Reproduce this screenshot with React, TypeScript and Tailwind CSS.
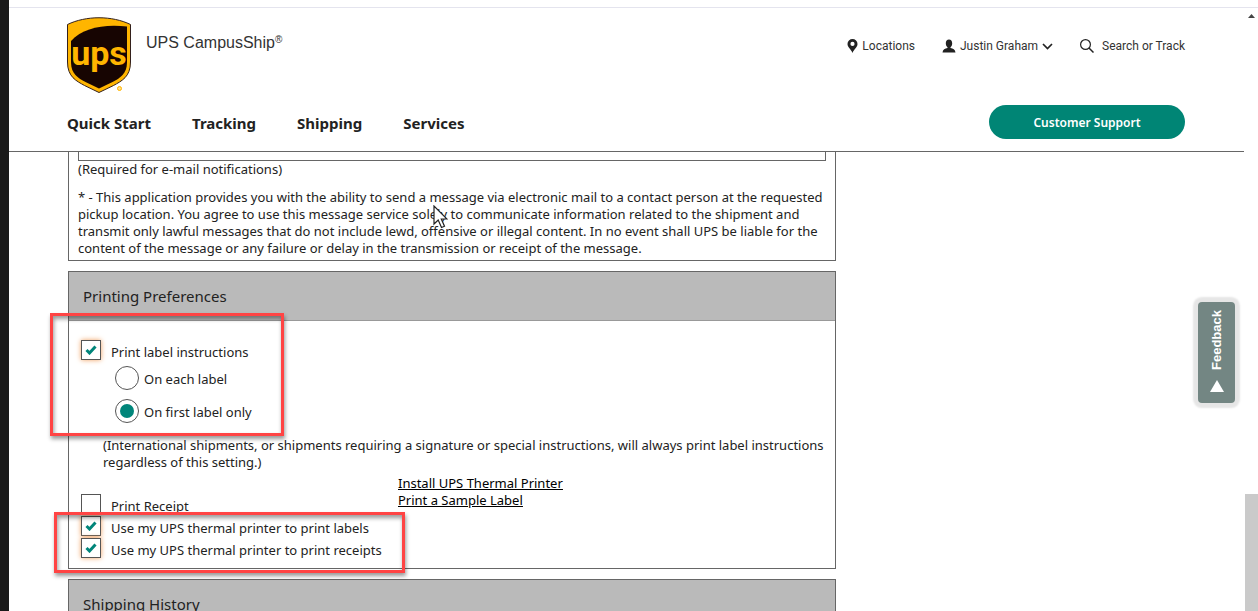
import { useState } from "react";
import type { ReactNode } from "react";

const navLinks = ["Quick Start", "Tracking", "Shipping", "Services"];

function Logo() {
  return (
    <svg viewBox="0 0 64 76" className="h-[76px] w-16 shrink-0" role="img" aria-label="UPS">
      <path
        d="M.5 7.500C19-1.500 45-1.500 63.500 7.500V45c0 15-9 19-17 23.500L32 75.500l-14.500-7C9.500 64 .5 60 .5 45Z"
        fill="#ffb500"
        stroke="#33201c"
        strokeWidth="1"
      />
      <path
        d="M4 24C16 11 36 7 60 9.500V45c0 12-7 16-14.500 20L32 71.500 18.500 65C11 61 4 57 4 45Z"
        fill="#170502"
      />
      <text
        x="32"
        y="48"
        textAnchor="middle"
        fontSize="34"
        fontWeight="700"
        fill="#ffb500"
        className="font-['Roboto',sans-serif]"
      >
        ups
      </text>
      <circle cx="52.500" cy="71.500" r="2" fill="#ffe08a" stroke="#ffb500" strokeWidth="1" />
    </svg>
  );
}

function PinIcon() {
  return (
    <svg viewBox="0 0 11 14" className="h-3.5 w-[11px]" aria-hidden="true">
      <path
        fillRule="evenodd"
        fill="#222"
        d="M5.500 0A5 5 0 0 0 .5 5c0 3.500 3.500 5 5 9 1.500-4 5-5.500 5-9a5 5 0 0 0-5-5Zm0 2.800a2.100 2.100 0 1 1 0 4.200 2.100 2.100 0 0 1 0-4.200Z"
      />
    </svg>
  );
}

function UserIcon() {
  return (
    <svg viewBox="0 0 14 14" className="size-3.5" aria-hidden="true">
      <path
        fill="#222"
        d="M7 .5c2 0 3.200 1.500 3.200 3.700 0 1.800-.7 3.300-1.700 4v.9c2.500.5 4.700 1.400 5 4.400H.5c.3-3 2.500-3.900 5-4.400v-.9c-1-.7-1.700-2.200-1.700-4C3.800 2 5 .5 7 .5Z"
      />
    </svg>
  );
}

function Tick() {
  return (
    <svg viewBox="0 0 12 10" className="pointer-events-none col-start-1 row-start-1 h-2.5 w-3" aria-hidden="true">
      <path d="M1.500 5 4.500 8 10.500 1.500" fill="none" stroke="#00857a" strokeWidth="3" />
    </svg>
  );
}

function CheckRow({
  id,
  initial = false,
  children,
}: {
  id: string;
  initial?: boolean;
  children: ReactNode;
}) {
  const [checked, setChecked] = useState(initial);

  return (
    <div className="flex h-[22px] items-start gap-2.5">
      <span className="grid place-items-center">
        <input
          id={id}
          type="checkbox"
          checked={checked}
          onChange={(e) => setChecked(e.target.checked)}
          className="col-start-1 row-start-1 size-5 appearance-none border border-[#555] bg-white checked:shadow-[0_0_5px_#f0a060]"
        />
        {checked && <Tick />}
      </span>
      <label htmlFor={id} className="pt-1">
        {children}
      </label>
    </div>
  );
}

function RadioRow({
  id,
  checked,
  onSelect,
  children,
}: {
  id: string;
  checked: boolean;
  onSelect: () => void;
  children: ReactNode;
}) {
  return (
    <div className="flex h-6 items-start gap-[5px]">
      <input
        id={id}
        type="radio"
        name="label-instructions"
        checked={checked}
        onChange={onSelect}
        className="size-6 appearance-none rounded-full border border-[#555] bg-white bg-clip-content p-1 checked:bg-[#00857a]"
      />
      <label htmlFor={id} className="pt-[5px]">
        {children}
      </label>
    </div>
  );
}

function PanelTitle({ children }: { children: ReactNode }) {
  return (
    <h2 className="flex h-[49px] items-center border-b border-[#999] bg-[#bababa] px-3.5 text-[15px] text-[#222]">
      {children}
    </h2>
  );
}

export default function App() {
  const [placement, setPlacement] = useState("first");

  return (
    <div className="flex h-screen overflow-hidden bg-white font-['Noto_Sans',sans-serif] text-[13px] leading-[17px] text-[#222]">
      <div className="w-[9px] shrink-0 bg-[#1a1a1a]" />

      <div className="flex min-w-0 flex-1 flex-col">
        <div className="h-2 shrink-0 border-b border-[#e4e4ee]" />

        <div className="flex min-h-0 flex-1">
          <div className="relative flex min-w-0 flex-1 flex-col">
            <header className="shrink-0 border-b border-[#666] pt-[9px] pr-[59px] pb-3 pl-[58px]">
              <div className="flex items-start justify-between">
                <div className="flex items-start gap-[15px]">
                  <Logo />
                  <p className="pt-4 font-['Liberation_Sans',sans-serif] text-base leading-5 text-[#333]">
                    UPS CampusShip<sup className="text-[10px]">®</sup>
                  </p>
                </div>
                <div className="flex items-center gap-[27px] pt-5 font-['Roboto',sans-serif] text-xs leading-[18px] text-[#333]">
                  <a href="#locations" className="flex items-center gap-1">
                    <PinIcon />
                    Locations
                  </a>
                  <button type="button" className="flex items-center gap-1">
                    <UserIcon />
                    Justin Graham
                    <svg viewBox="0 0 11 7" className="h-[7px] w-[11px]" aria-hidden="true">
                      <path d="m1 1 4.500 4.500L10 1" fill="none" stroke="#222" strokeWidth="1.700" />
                    </svg>
                  </button>
                  <button type="button" className="flex items-center gap-2">
                    <svg viewBox="0 0 14 14" className="size-3.5" aria-hidden="true">
                      <circle cx="5.500" cy="5.500" r="4.900" fill="none" stroke="#222" strokeWidth="1.200" />
                      <path d="m9 9 4.500 4.500" stroke="#222" strokeWidth="1.500" />
                    </svg>
                    Search or Track
                  </button>
                </div>
              </div>
              <div className="mt-3 flex items-center justify-between">
                <nav className="flex gap-[41px] pt-0.5 text-[15px] leading-5 font-bold">
                  {navLinks.map((name) => (
                    <a key={name} href="#nav">
                      {name}
                    </a>
                  ))}
                </nav>
                <button
                  type="button"
                  className="h-[34px] w-[196px] rounded-full bg-[#008575] pt-0.5 font-['Noto_Sans',sans-serif] text-xs font-semibold text-white"
                >
                  Customer Support
                </button>
              </div>
            </header>

            <main className="min-h-0 flex-1 overflow-hidden pr-5 pl-[59px]">
              <div className="flex max-w-[768px] flex-col gap-2.5">
                <section className="relative border-x border-b border-[#666] px-[9px] pb-[3px]">
                  <input
                    type="text"
                    aria-label="E-mail address"
                    className="block h-[9px] w-full border-x border-b border-[#666]"
                  />
                  <p>(Required for e-mail notifications)</p>
                  <p className="mt-[11px]">
                    * - This application provides you with the ability to send a message via electronic mail to a
                    contact person at the requested pickup location. You agree to use this message service solely to
                    communicate information related to the shipment and transmit only lawful messages that do not
                    include lewd, offensive or illegal content. In no event shall UPS be liable for the content of the
                    message or any failure or delay in the transmission or receipt of the message.
                  </p>
                  <svg viewBox="0 0 15 24" className="absolute top-[53px] left-[364px] h-6 w-[15px]" aria-hidden="true">
                    <path
                      d="M1 1v18l4.200-4 3.300 7.500 3-1.300L8.300 14H14Z"
                      fill="#fff"
                      stroke="#222"
                      strokeWidth="1.200"
                    />
                  </svg>
                </section>

                <section className="relative border border-[#666]">
                  <PanelTitle>Printing Preferences</PanelTitle>
                  <div className="pt-[19px] pr-1 pb-2 pl-3">
                    <CheckRow id="print-instructions" initial>
                      Print label instructions
                    </CheckRow>
                    <div className="flex flex-col gap-[9px] pt-1 pl-[34px]">
                      <RadioRow id="each" checked={placement === "each"} onSelect={() => setPlacement("each")}>
                        On each label
                      </RadioRow>
                      <RadioRow id="first" checked={placement === "first"} onSelect={() => setPlacement("first")}>
                        On first label only
                      </RadioRow>
                    </div>
                    <p className="mt-3.5 pl-[22px]">
                      (International shipments, or shipments requiring a signature or special instructions, will always
                      print label instructions regardless of this setting.)
                    </p>
                    <div className="flex pt-1">
                      <div className="flex w-[317px] flex-col pt-[19px]">
                        <CheckRow id="receipt">Print Receipt</CheckRow>
                        <CheckRow id="thermal-labels" initial>
                          Use my UPS thermal printer to print labels
                        </CheckRow>
                        <CheckRow id="thermal-receipts" initial>
                          Use my UPS thermal printer to print receipts
                        </CheckRow>
                      </div>
                      <div className="flex flex-col items-start text-black underline">
                        <a href="#install">Install UPS Thermal Printer</a>
                        <a href="#sample">Print a Sample Label</a>
                      </div>
                    </div>
                  </div>

                  <div className="pointer-events-none absolute top-[41px] -left-[19px] h-[123px] w-[234px] border-3 border-[#ff4444] shadow-[1px_3px_4px_#0006,inset_1px_3px_4px_#0006]" />
                  <div className="pointer-events-none absolute -bottom-[5px] -left-[15px] h-[61px] w-[351px] border-3 border-[#ff4444] shadow-[1px_3px_4px_#0006,inset_1px_3px_4px_#0006]" />
                </section>

                <section className="border border-[#666]">
                  <PanelTitle>Shipping History</PanelTitle>
                </section>
              </div>
            </main>

            <button
              type="button"
              className="absolute top-[294px] right-[9px] flex h-[101px] w-[37px] flex-col items-center gap-2.5 rounded-sm bg-[#738683] pt-2 font-['Liberation_Sans',sans-serif] text-white shadow-[0_0_2px_5px_#e6e6e6]"
            >
              <span className="rotate-180 text-[13px] leading-[18px] font-bold [writing-mode:vertical-rl]">Feedback</span>
              <svg viewBox="0 0 14 12" className="h-3 w-3.5" aria-hidden="true">
                <path d="M7 0 14 12H0Z" fill="#fff" />
              </svg>
            </button>
          </div>

          <div className="flex w-3.5 shrink-0 flex-col items-end justify-between">
            <svg viewBox="0 0 7 4" className="mt-1.5 mr-[3px] h-1 w-[7px]" aria-hidden="true">
              <path d="M3.500 0 7 4H0Z" fill="#444" />
            </svg>
            <div className="h-[117px] w-[13px] bg-[#cacaca]" />
          </div>
        </div>
      </div>
    </div>
  );
}
